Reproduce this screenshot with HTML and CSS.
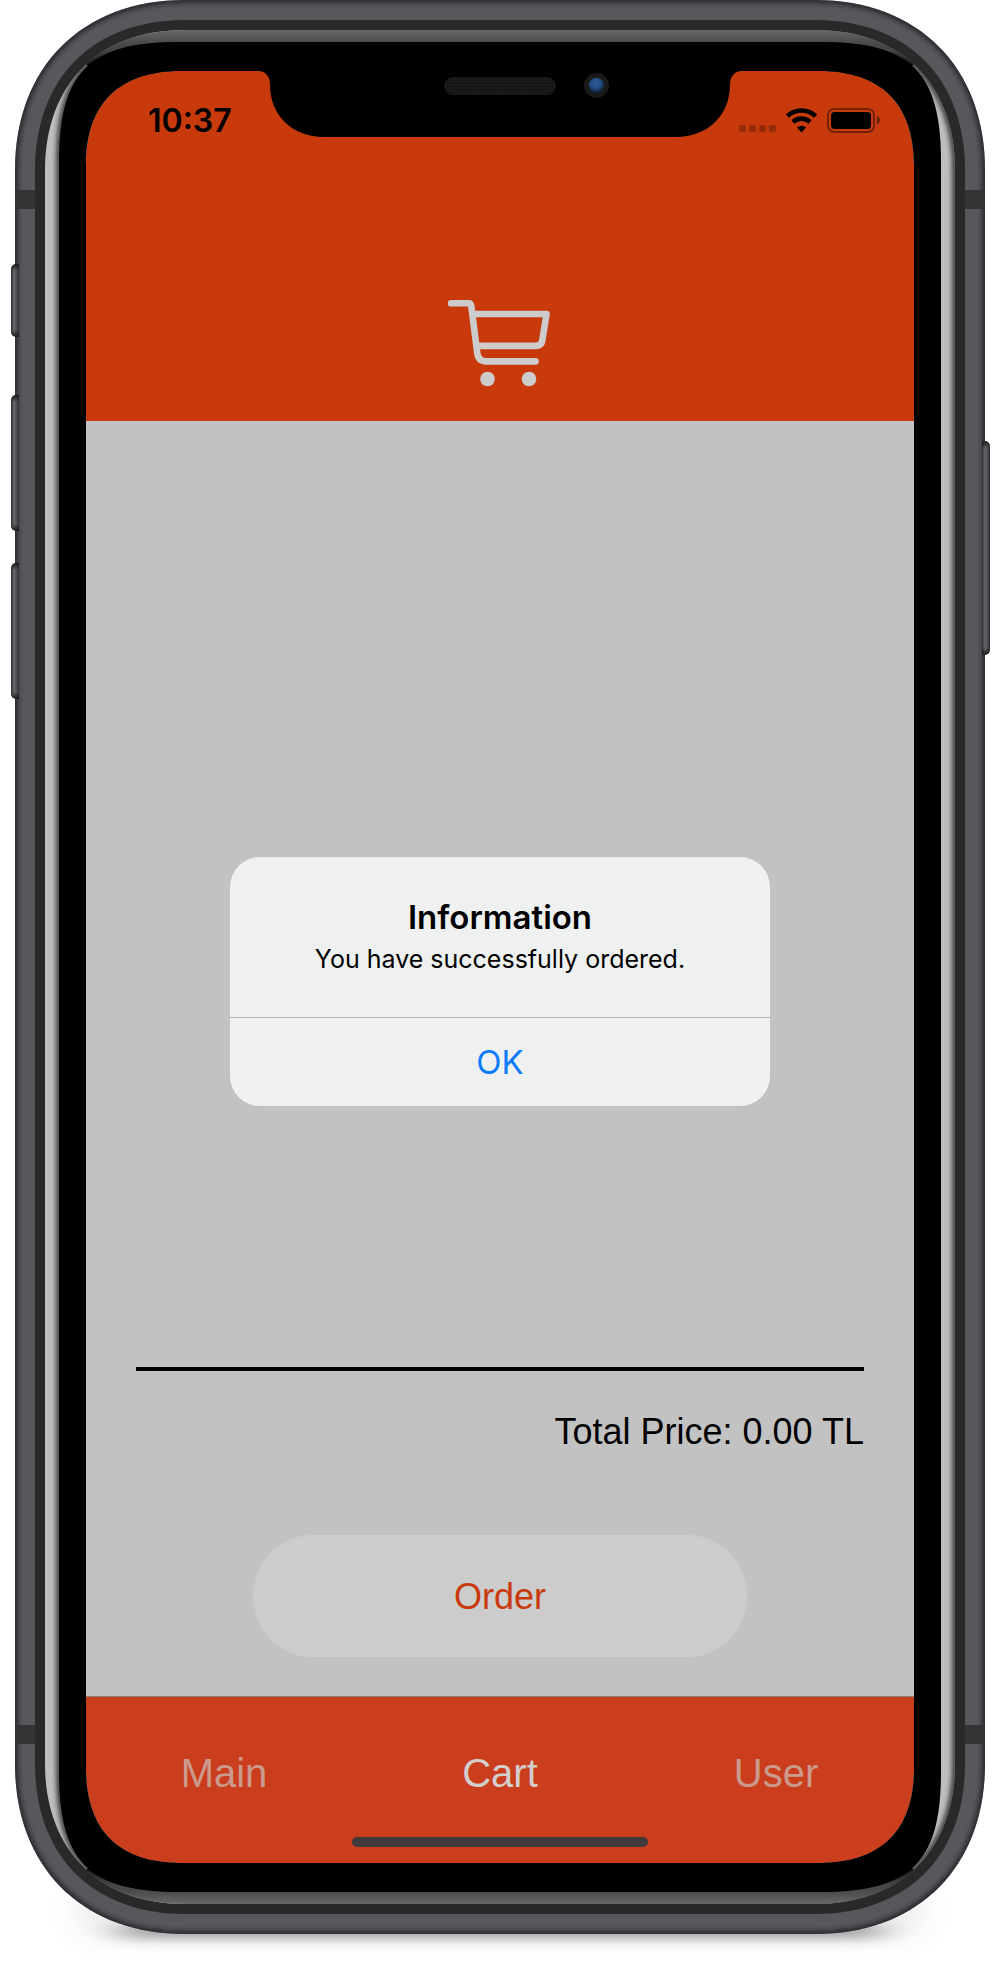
FILE: index.html
```html
<!DOCTYPE html>
<html lang="en">
<head>
  <meta charset="utf-8">
  <meta name="viewport" content="width=device-width, initial-scale=1">
  <title>Cart</title>
  <link rel="stylesheet" href="styles.css">
</head>
<body>
  <div class="device">
    <span class="side-button side-button--mute"></span>
    <span class="side-button side-button--up"></span>
    <span class="side-button side-button--down"></span>
    <span class="side-button side-button--power"></span>

    <div class="screen">
      <header class="header">
        <div class="status">
          <time class="status__time">10:37</time>
          <svg class="status__icons" width="142" height="26" viewBox="0 0 142 26" aria-hidden="true">
            <g fill="#000" opacity=".25">
              <rect x="0" y="17" width="7" height="7" rx="2"/>
              <rect x="10" y="17" width="7" height="7" rx="2"/>
              <rect x="20" y="17" width="7" height="7" rx="2"/>
              <rect x="30" y="17" width="7" height="7" rx="2"/>
            </g>
            <g fill="none" stroke="#000" stroke-width="4.6">
              <path d="M48.4 8.2a20.3 20.3 0 0 1 28.2 0"/>
              <path d="M54 14a12.400 12.400 0 0 1 17 0"/>
            </g>
            <path d="M58 19.500q4.500-3.600 9 0l-4.500 5z"/>
            <rect x="89" y="1" width="46" height="23" rx="6" fill="none" stroke="#000" stroke-opacity=".42" stroke-width="2"/>
            <rect x="92" y="4" width="40" height="17" rx="3.500"/>
            <path d="M138 8q3 1.500 3 4.200t-3 4.300z" opacity=".5"/>
          </svg>
        </div>
        <svg class="cart-icon" width="104" height="88" viewBox="0 0 104 88" aria-hidden="true">
          <g fill="none" stroke="#ccc" stroke-width="6.600" stroke-linecap="round" stroke-linejoin="round">
            <path d="M3 4.200h17.500q2.400 0 2.700 2.500l6 47q1 8.700 8.800 8.700H87.500"/>
            <path d="M25 15h73.500l-4.300 27q-1 4.900-6.500 4.900H30"/>
          </g>
          <circle cx="39.500" cy="80" r="7.300" fill="#ccc"/>
          <circle cx="81" cy="80" r="7.300" fill="#ccc"/>
        </svg>
      </header>

      <main class="content">
        <p class="total">Total Price: 0.00 TL</p>
        <button class="order" type="button">Order</button>
      </main>

      <nav class="tabs">
        <a class="tabs__item" href="#main">Main</a>
        <a class="tabs__item tabs__item--active" href="#cart" aria-current="page">Cart</a>
        <a class="tabs__item" href="#user">User</a>
        <span class="home-indicator"></span>
      </nav>

      <div class="overlay">
        <section class="alert" role="alertdialog" aria-labelledby="alert-title" aria-describedby="alert-text">
          <div class="alert__body">
            <h1 class="alert__title" id="alert-title">Information</h1>
            <p class="alert__text" id="alert-text">You have successfully ordered.</p>
          </div>
          <button class="alert__action" type="button">OK</button>
        </section>
      </div>

      <svg class="notch" width="484" height="66" viewBox="0 0 484 66" aria-hidden="true">
        <defs>
          <pattern id="mesh" width="3" height="3" patternUnits="userSpaceOnUse">
            <rect width="3" height="3" fill="#1c1c1c"/>
            <path d="M0 0H3M0 0V3" stroke="#101010"/>
          </pattern>
          <radialGradient id="lens" cx=".45" cy=".35" r=".65">
            <stop offset="0" stop-color="#2d5f9c"/>
            <stop offset=".5" stop-color="#234d83"/>
            <stop offset="1" stop-color="#0d1a33"/>
          </radialGradient>
        </defs>
        <path d="M0 0C8 0 12 6 12 14C12 44 34 66 66 66H418C450 66 472 44 472 14C472 6 476 0 484 0Z"/>
        <rect x="186" y="6" width="112" height="18" rx="9" fill="url(#mesh)"/>
        <circle cx="338.500" cy="14.500" r="12.500" fill="#191919"/>
        <circle cx="338.500" cy="14.500" r="7.800" fill="url(#lens)"/>
      </svg>
    </div>
  </div>
</body>
</html>
```
FILE: styles.css
```css
* {
  box-sizing: border-box;
}

body {
  margin: 0;
  background: #fff;
  font-family: "Liberation Sans", Arial, sans-serif;
}

.device {
  position: relative;
  display: flex;
  min-height: 100vh;
  padding: 71px 90px 123px 86px;
}

/* Phone body: corners keep their shape, the straight edges stretch. */
.device::after {
  content: "";
  position: absolute;
  inset: 0;
  border-style: solid;
  border-color: transparent;
  border-width: 215px 215px 275px;
  border-image: url("data:image/svg+xml,%3Csvg xmlns='http://www.w3.org/2000/svg' width='1004' height='1986' viewBox='0 0 1004 1986'%3E%3Cdefs%3E%3Cfilter id='b2' x='-10%25' y='-10%25' width='120%25' height='120%25'%3E%3CfeGaussianBlur stdDeviation='2.5'/%3E%3C/filter%3E%3Cfilter id='b5' x='-10%25' y='-300%25' width='120%25' height='700%25'%3E%3CfeGaussianBlur stdDeviation='18 6'/%3E%3C/filter%3E%3Cfilter id='b15' x='-10%25' y='-300%25' width='120%25' height='700%25'%3E%3CfeGaussianBlur stdDeviation='16'/%3E%3C/filter%3E%3ClinearGradient id='t' gradientUnits='userSpaceOnUse' x1='0' y1='30' x2='0' y2='70'%3E%3Cstop offset='0' stop-color='%23696969'/%3E%3Cstop offset='.3' stop-color='%234c4c4c'/%3E%3Cstop offset='.55' stop-color='%23404040'/%3E%3Cstop offset='.95' stop-color='%23000'/%3E%3C/linearGradient%3E%3ClinearGradient id='u' gradientUnits='userSpaceOnUse' x1='0' y1='1904' x2='0' y2='1864'%3E%3Cstop offset='0' stop-color='%23696969'/%3E%3Cstop offset='.3' stop-color='%234c4c4c'/%3E%3Cstop offset='.55' stop-color='%23404040'/%3E%3Cstop offset='.95' stop-color='%23000'/%3E%3C/linearGradient%3E%3CclipPath id='h'%3E%3Cpath clip-rule='evenodd' d='M0 0H1004V1986H0ZM86 165C86 104 119 71 180 71H820C881 71 914 104 914 165V1769C914 1830 881 1863 820 1863H180C119 1863 86 1830 86 1769Z'/%3E%3C/clipPath%3E%3CclipPath id='o'%3E%3Cpath d='M15 170C15 67 82 0 185 0H815C918 0 985 67 985 170V1764C985 1867 918 1934 815 1934H185C82 1934 15 1867 15 1764Z'/%3E%3C/clipPath%3E%3CclipPath id='s'%3E%3Cpath d='M45 170C45 84 99 30 185 30H815C901 30 955 84 955 170V1764C955 1850 901 1904 815 1904H185C99 1904 45 1850 45 1764Z'/%3E%3C/clipPath%3E%3CclipPath id='l'%3E%3Cpath d='M0 0H500V1986H0Z'/%3E%3C/clipPath%3E%3CclipPath id='r'%3E%3Cpath d='M500 0H1004V1986H500Z'/%3E%3C/clipPath%3E%3C/defs%3E%3Cg clip-path='url(%23h)'%3E%3Crect x='75' y='1890' width='850' height='44' rx='20' opacity='.08' filter='url(%23b15)'/%3E%3Crect x='120' y='1924' width='760' height='14' opacity='.36' filter='url(%23b5)'/%3E%3Cg clip-path='url(%23o)'%3E%3Cpath fill='%2358575c' d='M0 0H1004V1986H0Z'/%3E%3Cpath fill='none' stroke='%231c1c20' stroke-width='5' filter='url(%23b2)' d='M15 170C15 67 82 0 185 0H815C918 0 985 67 985 170V1764C985 1867 918 1934 815 1934H185C82 1934 15 1867 15 1764Z'/%3E%3Cpath fill='%23343435' d='M15 190H985V209H15ZM15 1725H985V1744H15Z'/%3E%3C/g%3E%3Cpath fill='%23292929' d='M35 170C35 78 93 20 185 20H815C907 20 965 78 965 170V1764C965 1856 907 1914 815 1914H185C93 1914 35 1856 35 1764Z'/%3E%3Cg clip-path='url(%23s)'%3E%3Cpath fill='%23bebebe' d='M0 0H1004V1986H0Z'/%3E%3Cg clip-path='url(%23l)'%3E%3Cpath fill='none' stroke='%23222' stroke-width='5' filter='url(%23b2)' d='M59 162C59 72 89 42 179 42H821C911 42 941 72 941 162V1772C941 1862 911 1892 821 1892H179C89 1892 59 1862 59 1772Z'/%3E%3C/g%3E%3Cg clip-path='url(%23r)'%3E%3Cpath fill='none' stroke='%23222' stroke-width='5' filter='url(%23b2)' d='M45 170C45 84 99 30 185 30H815C901 30 955 84 955 170V1764C955 1850 901 1904 815 1904H185C99 1904 45 1850 45 1764Z'/%3E%3C/g%3E%3Cpath fill='url(%23t)' d='M45 22L88 66L120 90H880L912 66L955 22Z'/%3E%3Cpath fill='url(%23u)' d='M45 1912L88 1868L120 1844H880L912 1868L955 1912Z'/%3E%3Cpath d='M59 162C59 72 89 42 179 42H821C911 42 941 72 941 162V1772C941 1862 911 1892 821 1892H179C89 1892 59 1862 59 1772Z'/%3E%3C/g%3E%3C/g%3E%3C/svg%3E") 215 215 275 215 stretch;
  pointer-events: none;
}

.side-button {
  position: absolute;
  z-index: 1;
  left: 11px;
  width: 8px;
  border-radius: 5px 0 0 5px;
  background: linear-gradient(#191a1a, transparent 7px calc(100% - 7px), #191a1a),
    linear-gradient(90deg, #2c2c30, #66666b 3px, #55555a 5px, #303034);
}

.side-button--mute {
  top: 264px;
  height: 73px;
}

.side-button--up {
  top: 395px;
  height: 136px;
}

.side-button--down {
  top: 563px;
  height: 136px;
}

.side-button--power {
  top: 441px;
  right: 14px;
  left: auto;
  height: 214px;
  border-radius: 0 5px 5px 0;
  background: linear-gradient(#191a1a, transparent 7px calc(100% - 7px), #191a1a),
    linear-gradient(90deg, #303034, #66666b 3px, #55555a 5px, #2c2c30);
}

.screen {
  position: relative;
  display: flex;
  flex: 1;
  flex-direction: column;
  background: #c2c2c2;
}

.header {
  display: flex;
  flex-direction: column;
  justify-content: space-between;
  min-height: 350px;
  padding: 30px 33px 34px;
  background: #c83a0b;
}

.status {
  display: flex;
  align-items: center;
  justify-content: space-between;
  padding-left: 29px;
}

.status__time {
  font: 600 32px/40px Inter, sans-serif;
}

.cart-icon {
  align-self: center;
}

.content {
  display: flex;
  flex: 1;
  flex-direction: column;
  align-items: center;
  justify-content: flex-end;
  padding: 0 50px 39px;
}

.total {
  align-self: stretch;
  margin: 0 0 83px;
  padding-top: 40px;
  border-top: 4px solid #000;
  font-size: 36px;
  line-height: 41px;
  text-align: right;
}

.order {
  width: 100%;
  max-width: 494px;
  height: 122px;
  padding: 2px 0 0;
  border: 0;
  border-radius: 60px;
  background: #ccc;
  color: #c83a0b;
  font: 36px/42px "Liberation Sans", Arial, sans-serif;
}

.tabs {
  position: relative;
  display: flex;
  height: 167px;
  border-top: 1px solid #8a8078;
  background: #ca3e1e;
}

.tabs__item {
  flex: 1;
  padding-top: 53px;
  color: #cc9a8c;
  font-size: 40px;
  line-height: 46px;
  text-align: center;
  text-decoration: none;
}

.tabs__item--active {
  color: #d3cfcd;
}

.home-indicator {
  position: absolute;
  bottom: 16px;
  left: 50%;
  width: 296px;
  height: 10px;
  border-radius: 5px;
  background: #413a3a;
  transform: translateX(-50%);
}

.overlay {
  position: absolute;
  inset: 0;
  display: flex;
  align-items: center;
  justify-content: center;
  padding-top: 29px;
}

.alert {
  width: 540px;
  overflow: hidden;
  border-radius: 30px;
  background: #eff1f0;
  font-family: Inter, sans-serif;
}

.alert__body {
  padding: 40px 32px;
  text-align: center;
}

.alert__title {
  margin: 0 0 4px;
  font-size: 33px;
  font-weight: 600;
  line-height: 40px;
}

.alert__text {
  margin: 0;
  font-size: 25px;
  line-height: 36px;
}

.alert__action {
  display: block;
  width: 100%;
  height: 89px;
  border: 0;
  border-top: 1px solid #b3b5b4;
  background: none;
  color: #0a7aff;
  font: 33px/40px Inter, sans-serif;
}

.notch {
  position: absolute;
  top: 0;
  left: 50%;
  transform: translateX(-50%);
}
```
